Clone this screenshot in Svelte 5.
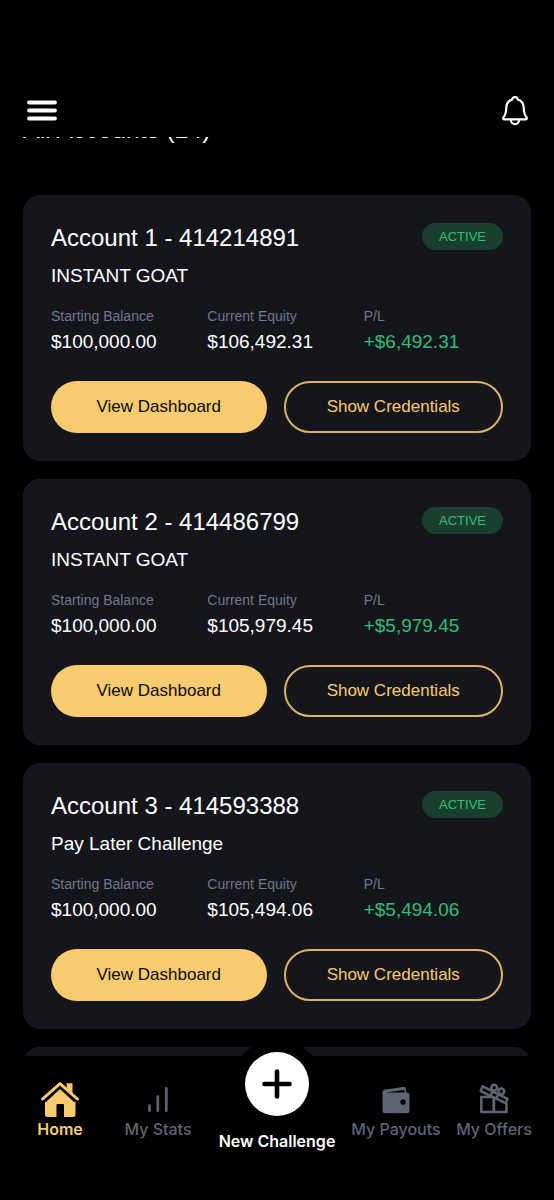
<script>
  const accounts = [
    { name: 'Account 1 - 414214891', plan: 'INSTANT GOAT', balance: '$100,000.00', equity: '$106,492.31', pl: '+$6,492.31' },
    { name: 'Account 2 - 414486799', plan: 'INSTANT GOAT', balance: '$100,000.00', equity: '$105,979.45', pl: '+$5,979.45' },
    { name: 'Account 3 - 414593388', plan: 'Pay Later Challenge', balance: '$100,000.00', equity: '$105,494.06', pl: '+$5,494.06' }
  ];
</script>

<div class="screen">
  <header>
    <button class="icon-button" aria-label="Menu">
      <svg width="30" height="30" viewBox="0 0 30 30" stroke="#fff" stroke-width="3.8" stroke-linecap="round">
        <path d="M2 6.500h26M2 14.500h26M2 22.500h26" />
      </svg>
    </button>
    <button class="icon-button" aria-label="Notifications">
      <svg width="26" height="30" viewBox="0 0 26 30" fill="none" stroke="#fff" stroke-width="2.2" stroke-linecap="round" stroke-linejoin="round">
        <path d="M10.2 3.4C10.5 2 11.500 1.200 13 1.200s2.500.8 2.800 2.200C19.600 4.700 21.600 7.600 21.700 11.500c.1 5.200.8 7.200 2.700 9.700.8 1.200.3 2.200-.9 2.200H2.500c-1.200 0-1.700-1-.9-2.200 1.900-2.500 2.600-4.500 2.700-9.700.1-3.900 2.100-6.800 5.900-8.100Z" />
        <path d="M8.800 23.600a4.200 4.600 0 0 0 8.400 0" />
      </svg>
    </button>
  </header>

  <main>
    <h1>All Accounts (14)</h1>
    <div class="list">
      {#each accounts as account}
        <article class="card">
          <div class="card-head">
            <h2>{account.name}</h2>
            <span class="badge">ACTIVE</span>
          </div>
          <p class="plan">{account.plan}</p>
          <dl class="figures">
            <div><dt>Starting Balance</dt><dd>{account.balance}</dd></div>
            <div><dt>Current Equity</dt><dd>{account.equity}</dd></div>
            <div><dt>P/L</dt><dd class="gain">{account.pl}</dd></div>
          </dl>
          <div class="actions">
            <button class="primary">View Dashboard</button>
            <button class="outline">Show Credentials</button>
          </div>
        </article>
      {/each}
      <article class="card next"></article>
    </div>
  </main>

  <nav aria-label="Main">
    <a class="active" href="#home">
      <span class="glyph">
        <svg width="38" height="36" viewBox="0 0 38 36">
          <path fill="currentColor" d="M25.700 1.200h5.800v12l-5.800-6Z" />
          <path fill="currentColor" d="M4 18 19 4.500 34.500 18v14.500q0 2.500-2.500 2.500h-9V23q0-1-1-1h-5.500q-1 0-1 1v12H6.500Q4 35 4 32.500Z" />
          <path fill="none" stroke="#000" stroke-width="5" stroke-linejoin="round" d="M3 18.300 19 3.600l16 14.700" />
          <path fill="none" stroke="currentColor" stroke-width="3" stroke-linecap="round" stroke-linejoin="round" d="M1.600 17 19 1.600 36.400 17" />
        </svg>
      </span>
      <span>Home</span>
    </a>
    <a href="#stats">
      <span class="glyph">
        <svg width="26" height="26" viewBox="0 0 26 26" stroke="currentColor" stroke-width="2.700" stroke-linecap="round">
          <path d="M4.500 18.500v5.200M12.800 9.700v14M21.300 1.400v22.300" />
        </svg>
      </span>
      <span>My Stats</span>
    </a>
    <a class="create" href="#new">
      <span class="disc">
        <svg width="30" height="30" viewBox="0 0 30 30" stroke="#000" stroke-width="4.600" stroke-linecap="round">
          <path d="M15 2.500v25M2.500 15h25" />
        </svg>
      </span>
      <span>New Challenge</span>
    </a>
    <a href="#payouts">
      <span class="glyph">
        <svg width="28" height="28" viewBox="0 0 28 28">
          <path fill="currentColor" fill-rule="evenodd" d="M.5 7Q.5 4 3 3.600L21.500.9Q24 .6 24 3v3.600h1q2.500 0 2.500 2.600v15.300q0 2.700-2.700 2.700H3.200Q.5 27.200.5 24.500ZM3.500 6.600H22.500V4Z M21 13.300a2.700 2.700 0 1 0 0 5.400 2.700 2.700 0 0 0 0-5.400Z" />
        </svg>
      </span>
      <span>My Payouts</span>
    </a>
    <a href="#offers">
      <span class="glyph">
        <svg width="30" height="34" viewBox="0 0 30 34" fill="none" stroke="currentColor" stroke-width="2.500" stroke-linejoin="round">
          <path d="M13 14H2.300V29h25.200V20" />
          <path d="M14.800 13.500v15.500" stroke-width="2.800" />
          <path d="M3.600 3.300 28.600 15.900l-2 4.200L1.700 8.200Z" />
          <path d="m13.600 8.300-2 4.200M19.400 11.200l-2 4.300" />
          <circle cx="15.200" cy="4.600" r="2.900" />
          <circle cx="22.300" cy="8.500" r="2.900" />
        </svg>
      </span>
      <span>My Offers</span>
    </a>
  </nav>
</div>

<style>
  :global(body) {
    margin: 0;
    background: #000;
  }
  .screen {
    display: flex;
    flex-direction: column;
    height: 100vh;
    background: #000;
    color: #fff;
    font-family: 'Liberation Sans', Arial, sans-serif;
  }
  button {
    margin: 0;
    padding: 0;
    border: 0;
    background: none;
    color: inherit;
    font: inherit;
    cursor: pointer;
  }
  svg {
    display: block;
  }
  header {
    display: flex;
    justify-content: space-between;
    align-items: center;
    padding: 96px 26px 11px 27px;
  }
  main {
    flex: 1;
    min-height: 0;
    overflow: hidden;
    padding: 0 23px;
  }
  h1,
  h2,
  p,
  dl,
  dd {
    margin: 0;
    font-weight: 400;
  }
  h1 {
    margin-top: -22px;
    font-size: 25px;
    line-height: 28px;
  }
  .list {
    display: flex;
    flex-direction: column;
    gap: 18px;
    margin-top: 52px;
  }
  .card {
    padding: 28px;
    border-radius: 17px;
    background: #15161b;
  }
  .card-head {
    display: flex;
    justify-content: space-between;
    align-items: flex-start;
  }
  h2 {
    font-size: 24px;
    line-height: 30px;
  }
  .badge {
    padding: 0 17px;
    border-radius: 14px;
    background: #19402f;
    color: #2ebd7f;
    font-size: 13px;
    line-height: 27px;
  }
  .plan {
    margin-top: 10px;
    font-size: 19px;
    line-height: 26px;
  }
  .figures {
    display: grid;
    grid-template-columns: repeat(3, 1fr);
    gap: 17px;
    margin-top: 18px;
  }
  dt {
    color: #737588;
    font-size: 14px;
    line-height: 18px;
  }
  dd {
    margin-top: 4px;
    font-size: 19px;
    line-height: 26px;
  }
  .gain {
    color: #2ebd7f;
  }
  .actions {
    display: flex;
    gap: 17px;
    margin-top: 26px;
  }
  .actions button {
    flex: 1;
    height: 52px;
    border-radius: 26px;
    font-size: 17px;
  }
  .primary {
    background: #f8cb6f;
    color: #0c0a06;
  }
  .actions .outline {
    border: 2px solid #d9b365;
    color: #f8cb6f;
  }
  nav {
    display: grid;
    grid-template-columns: 1fr 1fr 140px 1fr 1fr;
    align-items: start;
    padding: 0 11px 49px;
    background: #000;
    font-family: Inter, sans-serif;
    font-size: 16px;
    font-weight: 500;
    line-height: 20px;
  }
  nav a {
    display: flex;
    flex-direction: column;
    align-items: center;
    gap: 1px;
    margin-top: 26px;
    color: #5f6474;
    text-decoration: none;
    white-space: nowrap;
  }
  .glyph {
    display: grid;
    place-items: center;
    height: 36px;
  }
  nav .active {
    color: #f8cb6f;
    font-weight: 600;
  }
  nav .create {
    gap: 15px;
    margin-top: -4px;
    color: #fff;
    font-weight: 600;
  }
  .disc {
    display: grid;
    place-items: center;
    width: 64px;
    height: 64px;
    border-radius: 50%;
    background: #fff;
    box-shadow: 0 0 0 13px #000;
  }
</style>
